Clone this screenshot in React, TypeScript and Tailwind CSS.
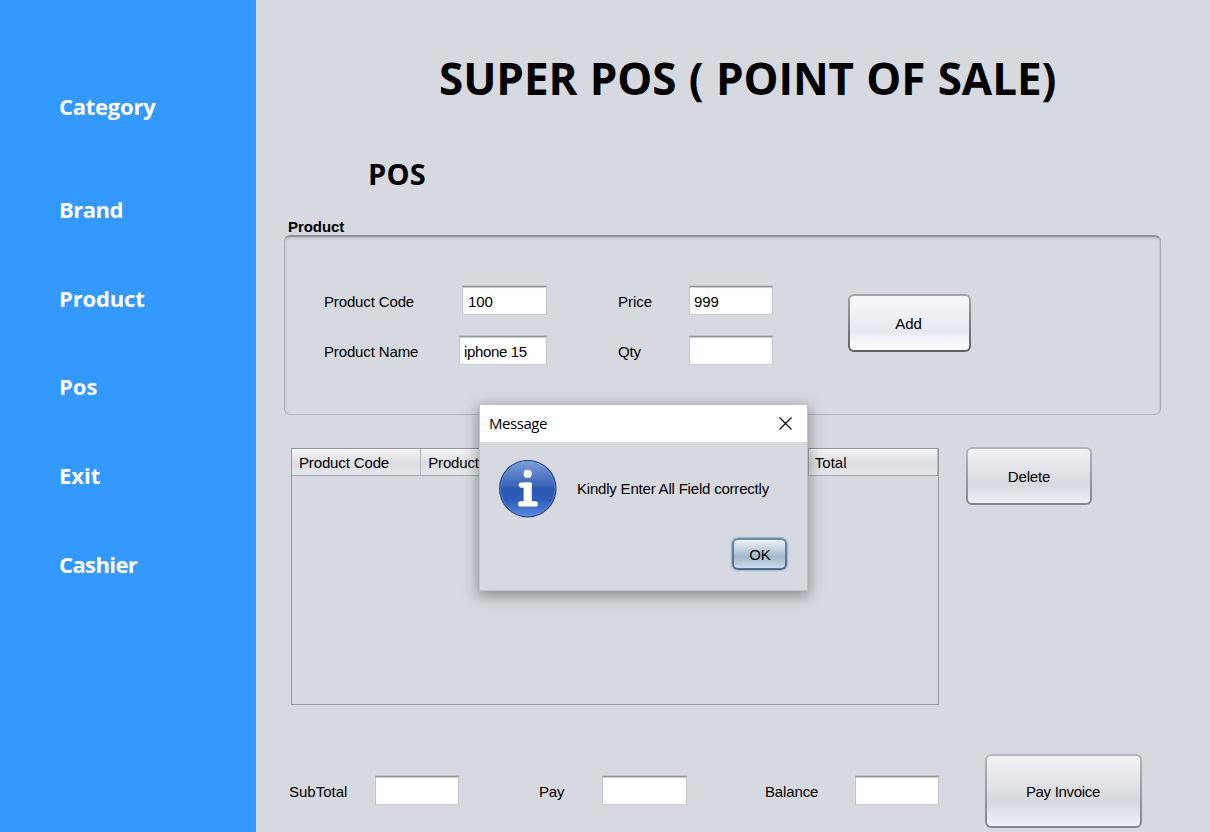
import React from 'react';

function Field({ value = '', className }: { value?: string; className: string }) {
  return (
    <div
      className={`flex h-[29px] shrink-0 items-center border border-t-[#94979c] border-x-[#c4c7cc] border-b-[#cbced3] bg-white shadow-[inset_0_1px_1px_#c4c6ca,0_-1px_0_#c2c5ca] ${className}`}
    >
      <span className="mt-px leading-[17px]">{value}</span>
    </div>
  );
}

function Button({ label, className, face }: { label: string; className: string; face: string }) {
  return (
    <button className={`flex shrink-0 rounded-[6px] p-[2px] ${className}`}>
      <span className={`flex h-full w-full items-center justify-center rounded-[4px] ${face}`}>{label}</span>
    </button>
  );
}

const greyRim = 'bg-linear-to-b from-[#b2b5bb] to-[#82858d]';
const greyFace = 'bg-linear-to-b from-[#f2f3f5] via-[#d6d9df] via-65% to-[#eef1fa] pt-[2px]';

function InfoIcon() {
  return (
    <svg width="58" height="58" viewBox="0 0 58 58" className="shrink-0">
      <defs>
        <linearGradient id="disc" x1="0" y1="0" x2="0" y2="1">
          <stop offset="0" stopColor="#7f9fd8" />
          <stop offset="0.45" stopColor="#3a64b8" />
          <stop offset="0.5" stopColor="#2a57b0" />
          <stop offset="0.7" stopColor="#2f5cba" />
          <stop offset="1" stopColor="#5a8ae6" />
        </linearGradient>
      </defs>
      <circle cx="28.8" cy="28.7" r="28.2" fill="url(#disc)" stroke="#22458f" strokeWidth="1.1" />
      <circle cx="28.8" cy="28.7" r="27.1" fill="none" stroke="#7fa0e0" strokeOpacity="0.45" strokeWidth="0.9" />
      <circle cx="28.7" cy="13.9" r="4.1" fill="#fff" />
      <rect x="19.6" y="22.4" width="13.2" height="5.3" rx="2.4" fill="#fff" />
      <rect x="24.6" y="22.4" width="8.2" height="22" rx="1.4" fill="#fff" />
      <rect x="19" y="41.2" width="20" height="5.4" rx="2.6" fill="#fff" />
    </svg>
  );
}

function Dialog() {
  return (
    <div className="absolute left-[479px] top-[404px] flex h-[187px] w-[329px] flex-col border border-[#bfc1c6] bg-[#d6d9df] shadow-[0_4px_14px_1px_rgba(0,0,0,0.36)]">
      <div className="flex h-[37px] shrink-0 items-center justify-between bg-white pl-[9px] pr-[15px]">
        <span className="font-['Open_Sans',sans-serif] text-[15px] tracking-[-0.45px]">Message</span>
        <svg width="13" height="13" viewBox="0 0 13 13" className="shrink-0">
          <path d="M0.5 0.5L12.5 12.5M12.5 0.5L0.5 12.5" stroke="#000" strokeWidth="1.1" />
        </svg>
      </div>
      <div className="flex h-[94px] shrink-0 items-center gap-5 pl-[19px]">
        <InfoIcon />
        <span className="whitespace-nowrap tracking-[-0.2px]">Kindly Enter All Field correctly</span>
      </div>
      <div className="flex justify-end pr-[20px] pt-[2px]">
        <Button
          label="OK"
          className="h-[32px] w-[55px] bg-linear-to-b from-[#6b8dab] to-[#4c6f8f] shadow-[0_0_1px_1px_#9ab8d2]"
          face="bg-linear-to-b from-[#eef2f6] via-[#a3b8cb] via-60% to-[#c9dcec] pt-[2px] pl-px"
        />
      </div>
    </div>
  );
}

const navItems = [
  { label: 'Category', style: 'h-[103px] tracking-[-0.25px]' },
  { label: 'Brand', style: 'h-[89px] tracking-[-0.5px]' },
  { label: 'Product', style: 'h-[88px] tracking-[-0.15px]' },
  { label: 'Pos', style: 'h-[89px]' },
  { label: 'Exit', style: 'h-[89px]' },
  { label: 'Cashier', style: 'h-[89px] tracking-[-0.6px]' },
];

const columns = ['Product Code', 'Product Name', 'Price', 'Qty', 'Total'];

export default function App() {
  return (
    <div className="relative flex h-[832px] w-[1210px] overflow-hidden bg-[#d6d9df] font-['Liberation_Sans',Arial,sans-serif] text-[15px] tracking-[-0.14px] text-black">
      <nav className="flex w-64 shrink-0 flex-col bg-[#3399ff] pl-[59px] pt-[91px] font-['Open_Sans',sans-serif] text-[22px] font-bold leading-[30px] tracking-normal text-white">
        {navItems.map((item) => (
          <a key={item.label} className={`block ${item.style}`}>
            {item.label}
          </a>
        ))}
      </nav>

      <main className="flex grow flex-col">
        <h1 className="ml-[183px] mt-[48px] whitespace-nowrap font-['Open_Sans',sans-serif] text-[44px] font-bold leading-[60px] tracking-[-0.08px] [word-spacing:1px]">
          SUPER POS ( POINT OF SALE)
        </h1>
        <h2 className="ml-[112px] mt-[46px] font-['Open_Sans',sans-serif] text-[29px] font-bold leading-10 tracking-[0.2px]">
          POS
        </h2>

        <h3 className="ml-8 mt-[24px] h-[17px] text-[15px] font-bold leading-[18px] tracking-[-0.05px]">Product</h3>
        <section className="ml-7 flex h-[180px] w-[877px] shrink-0 rounded-[6px] border border-t-2 border-t-[#8e9197] border-x-[#a9acb2] border-b-[#b3b6bc] pl-[39px] pt-[49px] shadow-[inset_0_1px_3px_#b4b7bc]">
          <div className="flex w-[223px] flex-col gap-[21px]">
            <div className="flex items-center justify-between">
              <label className="mt-[3px]">Product Code</label>
              <Field value="100" className="w-[85px] pl-[5px]" />
            </div>
            <div className="flex items-center justify-between">
              <label className="mt-[3px]">Product Name</label>
              <Field value="iphone 15" className="w-[88px] pl-[4px] tracking-[-0.35px]" />
            </div>
          </div>
          <div className="ml-[71px] flex w-[155px] flex-col gap-[21px]">
            <div className="flex items-center justify-between">
              <label className="mt-[3px] tracking-normal">Price</label>
              <Field value="999" className="w-[84px] pl-[4px]" />
            </div>
            <div className="flex items-center justify-between">
              <label className="mt-[3px]">Qty</label>
              <Field className="w-[84px]" />
            </div>
          </div>
          <Button
            label="Add"
            className="ml-[75px] mt-[8px] h-[58px] w-[123px] bg-linear-to-b from-[#a2a5ab] to-[#5c5f66]"
            face="bg-linear-to-b from-[#f7f8fb] via-[#e6e9f1] via-65% to-[#ffffff] pr-[2px] pt-[2px]"
          />
        </section>

        <div className="ml-[35px] mt-[32px] flex shrink-0 items-start">
          <div className="mt-px h-[257px] w-[648px] border border-[#9297a1]">
            <div className="grid h-[27px] grid-cols-5 border-b border-[#a3a7af] bg-linear-to-b from-[#f4f5f7] via-[#dcdee2] via-55% to-[#e6e8ed]">
              {columns.map((name) => (
                <div
                  key={name}
                  className="flex items-center whitespace-nowrap border-r border-[#b0b3b9] pl-[7px] pt-[2px] last:pl-[6px] last:tracking-normal"
                >
                  {name}
                </div>
              ))}
            </div>
          </div>
          <Button label="Delete" className={`ml-[27px] h-[58px] w-[126px] ${greyRim}`} face={greyFace} />
        </div>

        <div className="ml-[33px] mt-[48px] flex h-[75px] shrink-0 items-center">
          <label className="w-[86px] pt-[3px] tracking-normal">SubTotal</label>
          <Field className="w-[84px]" />
          <label className="ml-[80px] w-[63px] pt-[3px]">Pay</label>
          <Field className="w-[85px]" />
          <label className="ml-[78px] w-[90px] pt-[3px]">Balance</label>
          <Field className="w-[84px]" />
          <Button
            label="Pay Invoice"
            className={`ml-[46px] h-[74px] w-[157px] tracking-[-0.3px] ${greyRim}`}
            face={`pr-px ${greyFace} pt-[4px]`}
          />
        </div>
      </main>

      <Dialog />
    </div>
  );
}
